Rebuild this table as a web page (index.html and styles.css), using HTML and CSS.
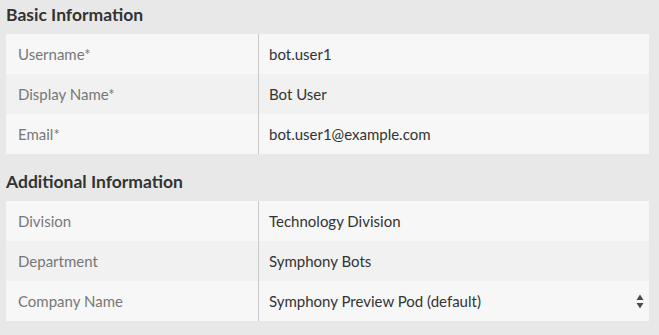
FILE: index.html
```html
<!DOCTYPE html>
<html lang="en">
    <head>
        <meta charset="UTF-8" />
        <title>Bot Details</title>
        <link rel="stylesheet" href="styles.css">
    </head>
    <body>
        <div class="section">
            <h2 class="section-title">Basic Information</h2>
            <div class="fields">
                <div class="row">
                    <div class="label">Username*</div>
                    <div class="value">bot.user1</div>
                </div>
                <div class="row">
                    <div class="label">Display Name*</div>
                    <div class="value">Bot User</div>
                </div>
                <div class="row">
                    <div class="label">Email*</div>
                    <div class="value">bot.user1@example.com</div>
                </div>
            </div>
        </div>

        <div class="section">
            <h2 class="section-title">Additional Information</h2>
            <div class="fields">
                <div class="row">
                    <div class="label">Division</div>
                    <div class="value">Technology Division</div>
                </div>
                <div class="row">
                    <div class="label">Department</div>
                    <div class="value">Symphony Bots</div>
                </div>
                <div class="row">
                    <div class="label">Company Name</div>
                    <div class="value select">
                        <span>Symphony Preview Pod (default)</span>
                        <svg class="arrows" width="8" height="15" viewBox="0 0 8 15">
                            <path d="M4 0.5 L7.5 6 L0.5 6 Z" fill="#4a4a4a" />
                            <path d="M4 14.5 L7.5 9 L0.5 9 Z" fill="#4a4a4a" />
                        </svg>
                    </div>
                </div>
            </div>
        </div>
    </body>
</html>
```

FILE: styles.css
```css
* {
    margin: 0;
    padding: 0;
    box-sizing: border-box;
}
body {
    font-family: Lato, "Open Sans", sans-serif;
    background: #e8e8e8;
    color: #333;
    padding: 5px 10px 0 6px;
}

.section + .section {
    margin-top: 18px;
}
.section-title {
    font-size: 17.5px;
    font-weight: bold;
    line-height: 20px;
    color: #333;
    margin-bottom: 9px;
}

.fields {
    display: flex;
    flex-direction: column;
}
.row {
    display: grid;
    grid-template-columns: 253px 1fr;
    height: 40px;
    background: #f7f7f7;
    font-size: 15px;
    line-height: 40px;
}
.row:nth-child(2) {
    background: #f1f1f1;
}
.label {
    padding-left: 12px;
    color: #777;
    border-right: 1px solid #c8c8c8;
}
.value {
    padding-left: 10px;
    color: #333;
}
.select {
    display: flex;
    justify-content: space-between;
    align-items: center;
    padding-right: 5px;
}
.arrows {
    display: block;
}
```
